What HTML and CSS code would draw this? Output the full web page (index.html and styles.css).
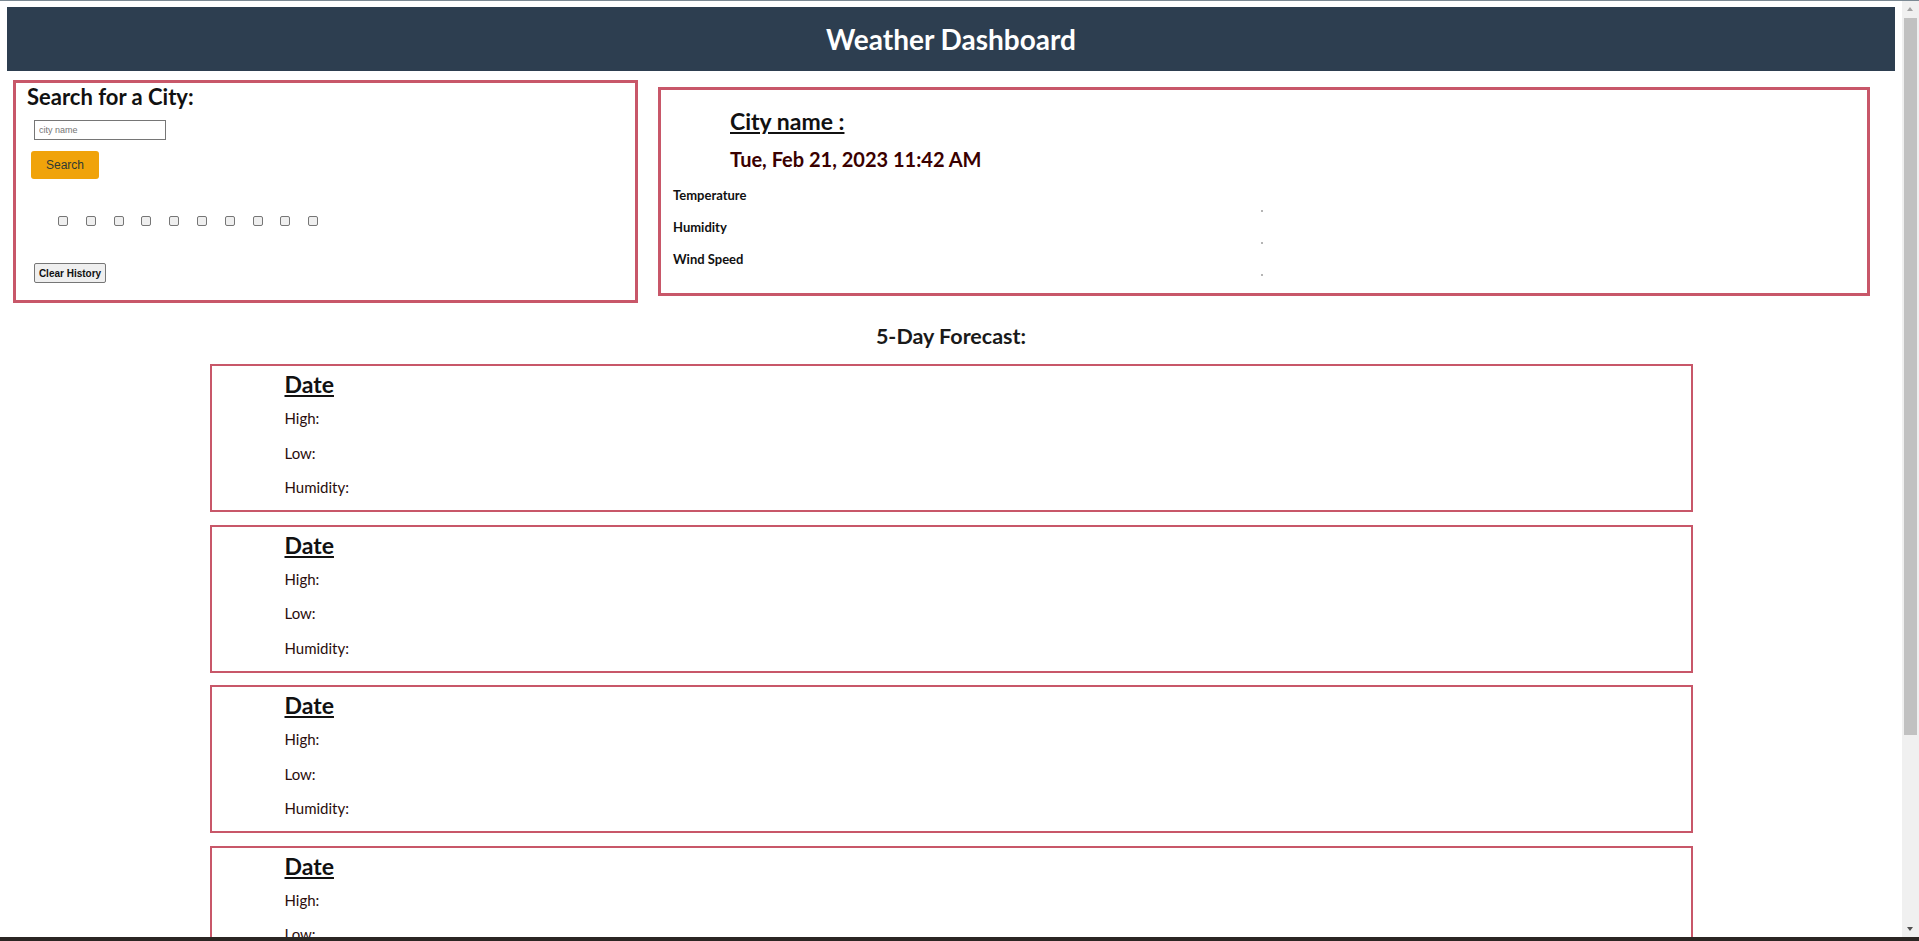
FILE: index.html
```html
<!DOCTYPE html>
<html lang="en">
<head>
<meta charset="utf-8">
<title>Weather Dashboard</title>
<link rel="stylesheet" href="styles.css">
</head>
<body>
<div class="page">
  <header class="topbar"><h1>Weather Dashboard</h1></header>
  <section class="top-row">
    <div class="search-panel">
      <h2 class="search-title">Search for a City:</h2>
      <input class="city-input" type="text" placeholder="city name">
      <button class="search-btn">Search</button>
      <div class="history">
        <button class="hist"></button><button class="hist"></button><button class="hist"></button><button class="hist"></button><button class="hist"></button><button class="hist"></button><button class="hist"></button><button class="hist"></button><button class="hist"></button><button class="hist"></button>
      </div>
      <button class="clear-btn">Clear History</button>
    </div>
    <div class="current">
      <h2 class="city">City name :</h2>
      <h3 class="now">Tue, Feb 21, 2023 11:42 AM</h3>
      <div class="stats">
        <div class="stat"><div class="label">Temperature</div><div class="value"><span class="dot"></span></div></div>
        <div class="stat"><div class="label">Humidity</div><div class="value"><span class="dot"></span></div></div>
        <div class="stat"><div class="label">Wind Speed</div><div class="value"><span class="dot"></span></div></div>
      </div>
    </div>
  </section>
  <h2 class="fc-title">5-Day Forecast:</h2>
  <div class="cards">
    <div class="card"><h3>Date</h3><p>High:</p><p>Low:</p><p>Humidity:</p></div>
    <div class="card"><h3>Date</h3><p>High:</p><p>Low:</p><p>Humidity:</p></div>
    <div class="card"><h3>Date</h3><p>High:</p><p>Low:</p><p>Humidity:</p></div>
    <div class="card"><h3>Date</h3><p>High:</p><p>Low:</p><p>Humidity:</p></div>
    <div class="card"><h3>Date</h3><p>High:</p><p>Low:</p><p>Humidity:</p></div>
  </div>
</div>
<div class="topline"></div>
<div class="scrollbar"><span class="arrow-up"></span><span class="thumb"></span><span class="arrow-down"></span></div>
<div class="taskbar"></div>
</body>
</html>
```
FILE: styles.css
```css
html { overflow: hidden; }
body {
  margin: 0;
  font-family: Lato, "Open Sans", sans-serif;
  background: #fff;
  color: #111;
}
.page { padding: 7px 24px 40px 7px; }

.topbar {
  height: 64px;
  background: #2d3e50;
  display: flex;
  align-items: center;
  justify-content: center;
}
.topbar h1 {
  margin: 0;
  font-size: 28px;
  line-height: 64px;
  font-weight: 700;
  color: #fff;
}

.top-row {
  display: flex;
  align-items: flex-start;
  margin-top: 9px;
  padding-left: 6px;
}

.search-panel {
  width: 625px;
  box-sizing: border-box;
  border: 3px solid #c85769;
  padding: 2px 11px 17px 11px;
  display: flex;
  flex-direction: column;
  align-items: flex-start;
}
.search-title {
  margin: 0;
  font-size: 22px;
  line-height: 24px;
  font-weight: 700;
  color: #111;
}
.city-input {
  margin: 11px 0 0 7px;
  width: 132px;
  height: 20px;
  box-sizing: border-box;
  border: 1px solid #767676;
  padding: 0 4px;
  font: 9px "Liberation Sans", Arial, sans-serif;
  color: #222;
}
.city-input::placeholder { color: #757575; }
.search-btn {
  margin: 11px 0 0 4px;
  width: 68px;
  height: 28px;
  border: none;
  border-radius: 3px;
  background: #f0a30a;
  color: #2e3a34;
  font: 12px "Liberation Sans", Arial, sans-serif;
  padding: 0;
}
.history {
  display: flex;
  gap: 17.8px;
  margin: 37px 0 0 31px;
}
.hist {
  width: 10px;
  height: 10px;
  box-sizing: border-box;
  padding: 0;
  border: 1px solid #767676;
  border-radius: 2px;
  background: #efefef;
}
.clear-btn {
  margin: 37px 0 0 7px;
  width: 72px;
  height: 20px;
  box-sizing: border-box;
  padding: 0;
  border: 1px solid #767676;
  border-radius: 2px;
  background: #efefef;
  color: #111;
  font: 700 10px "Liberation Sans", Arial, sans-serif;
}

.current {
  width: 1212px;
  box-sizing: border-box;
  margin: 7px 0 0 20px;
  border: 3px solid #c85769;
  padding: 19px 0 10px 12px;
}
.city {
  margin: 0 0 0 57px;
  font-size: 23px;
  line-height: 24px;
  font-weight: 700;
  text-decoration: underline;
  color: #111;
}
.now {
  margin: 14px 0 0 57px;
  font-size: 20px;
  line-height: 24px;
  font-weight: 700;
  color: #3a0000;
}
.stats { margin-top: 16px; }
.label {
  font-size: 13px;
  line-height: 16px;
  font-weight: 700;
  color: #111;
}
.value {
  height: 16px;
  display: flex;
  align-items: center;
  justify-content: center;
  padding-right: 16px;
}
.dot {
  width: 2px;
  height: 2px;
  background: #b5b5b5;
}

.fc-title {
  margin: 21px 0 0;
  text-align: center;
  font-size: 21.5px;
  line-height: 24px;
  font-weight: 700;
  color: #1a1a1a;
}
.cards {
  margin-top: 16px;
  display: flex;
  flex-direction: column;
  gap: 12.5px;
  align-items: center;
}
.card {
  width: 1483px;
  box-sizing: border-box;
  border: 2px solid #c85769;
  padding: 3px 0 13px 73px;
}
.card h3 {
  margin: 0;
  font-size: 23px;
  line-height: 30px;
  font-weight: 700;
  text-decoration: underline;
  color: #111;
}
.card p {
  margin: 14.5px 0 0;
  font-size: 15px;
  line-height: 20px;
  color: #2a0d0d;
}
.card h3 + p { margin-top: 9px; }

.topline {
  position: fixed;
  top: 0;
  left: 0;
  right: 0;
  height: 1px;
  background: #7b8993;
}
.scrollbar {
  position: fixed;
  top: 1px;
  right: 0;
  bottom: 4px;
  width: 17px;
  background: #f0f0f0;
}
.thumb {
  position: absolute;
  top: 17px;
  left: 2px;
  width: 13px;
  height: 717px;
  background: #c1c1c1;
}
.arrow-up, .arrow-down {
  position: absolute;
  left: 5px;
  width: 0;
  height: 0;
  border-left: 3.5px solid transparent;
  border-right: 3.5px solid transparent;
}
.arrow-up { top: 6px; border-bottom: 4px solid #a3a3a3; }
.arrow-down { bottom: 6px; border-top: 4px solid #505050; }
.taskbar {
  position: fixed;
  left: 0;
  right: 0;
  bottom: 0;
  height: 4px;
  background: #2b2623;
}
```
